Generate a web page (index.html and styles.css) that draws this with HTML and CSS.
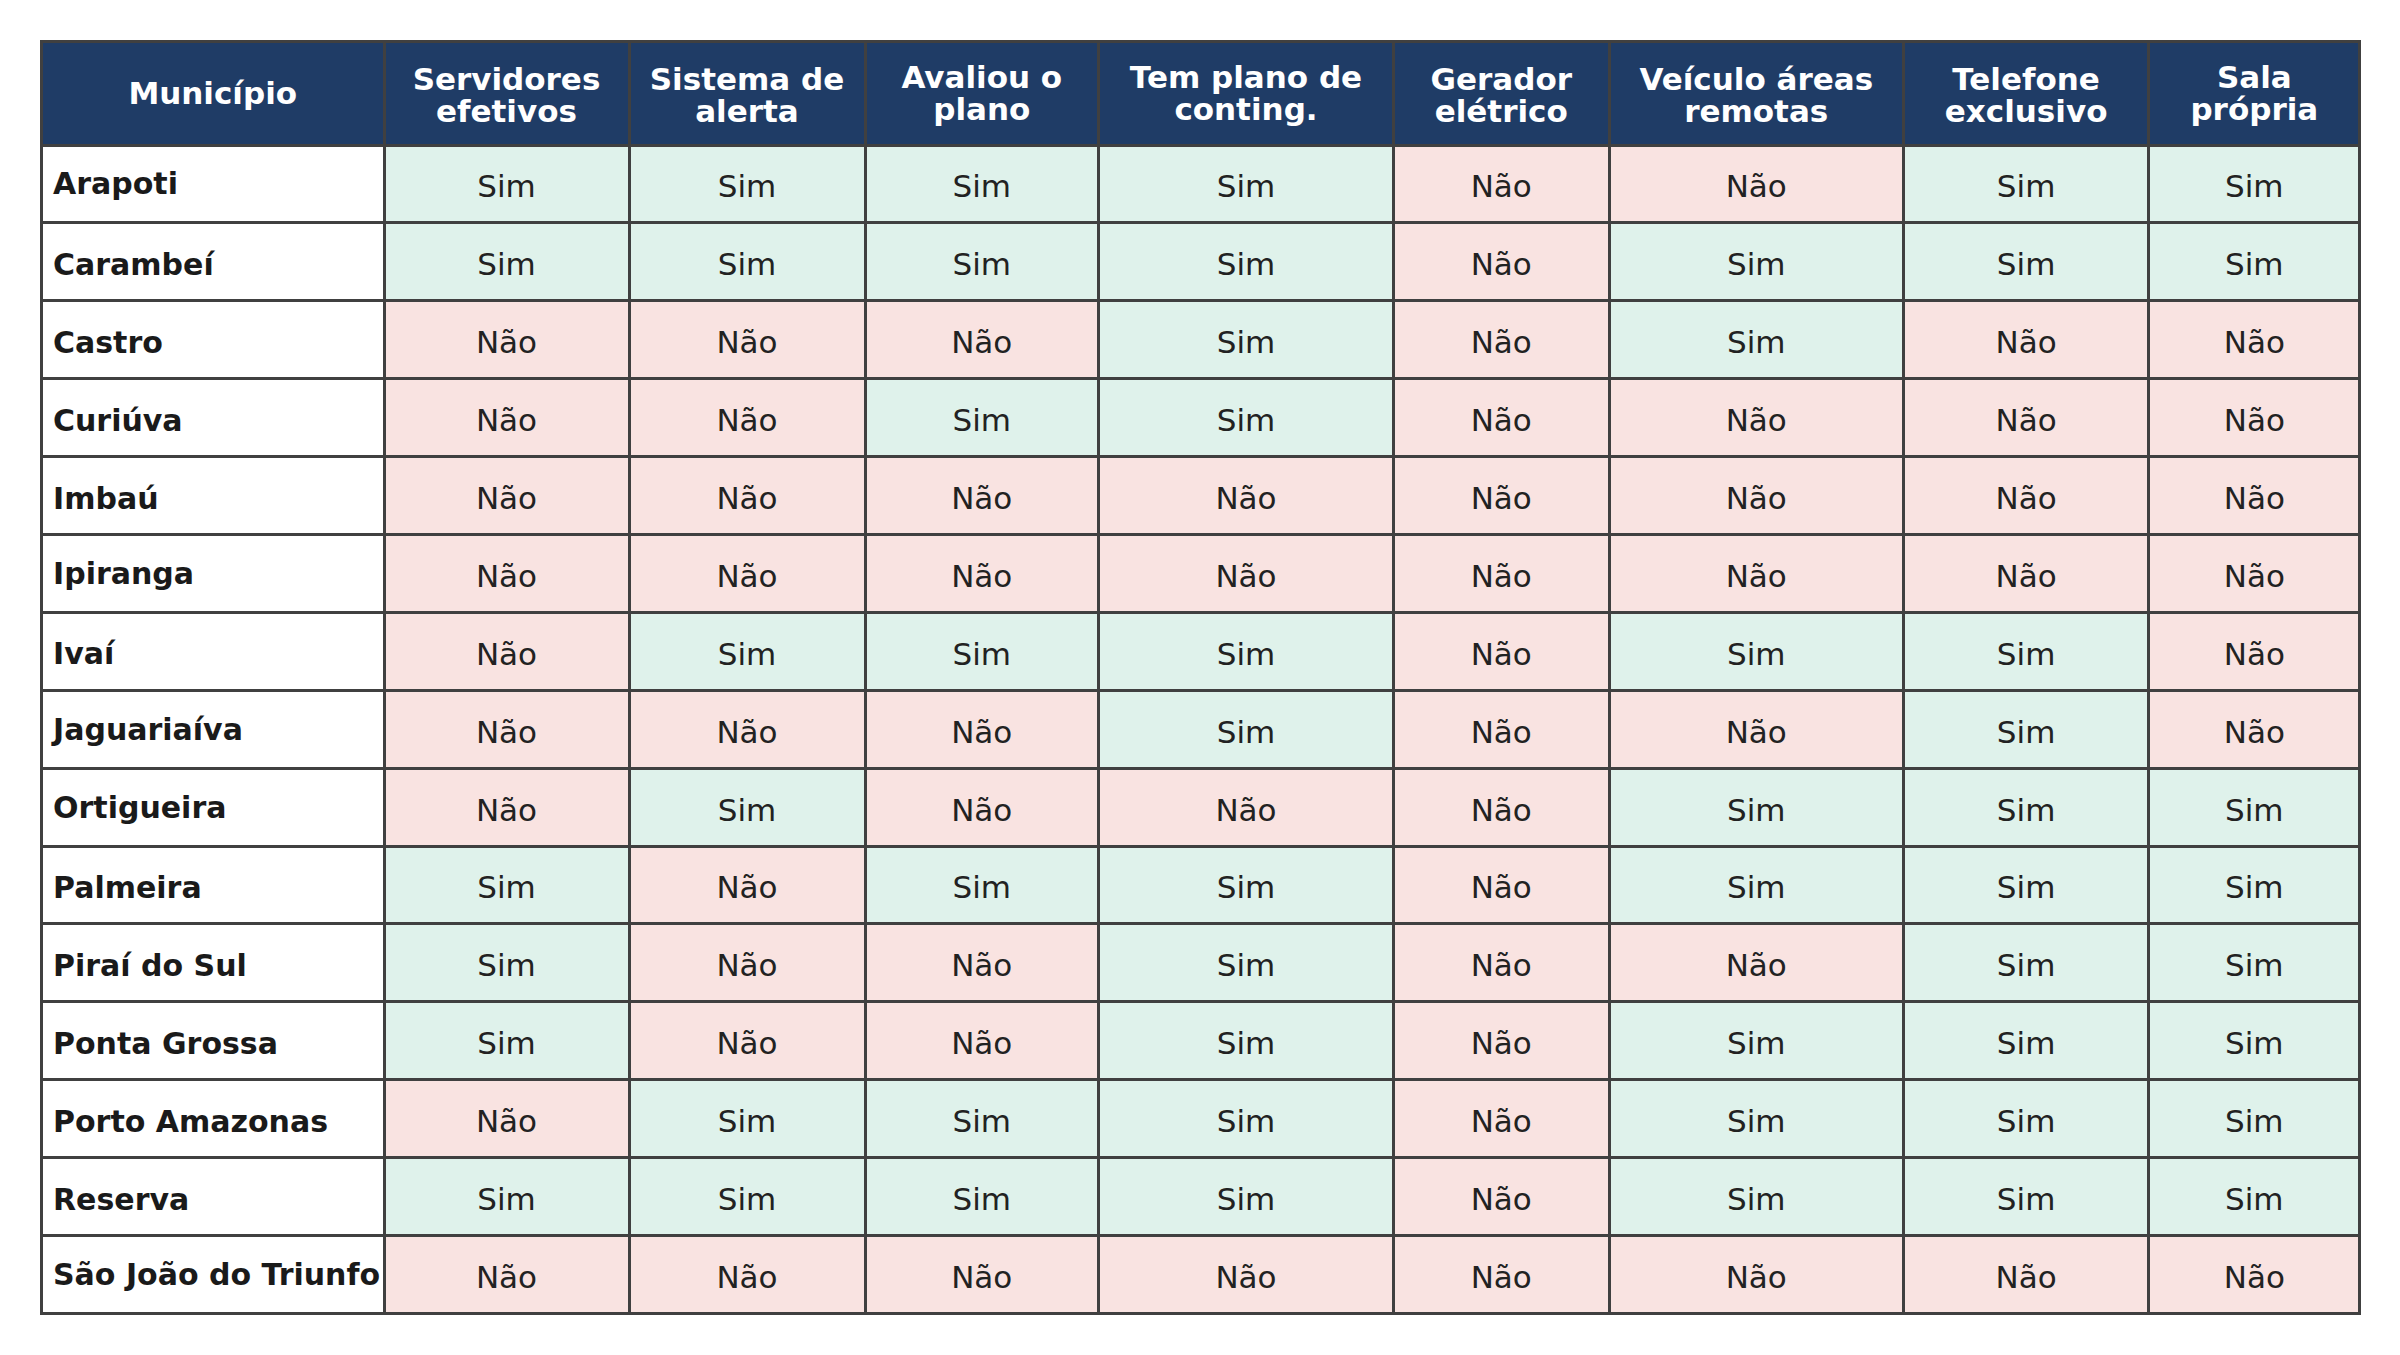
FILE: index.html
```html
<!DOCTYPE html>
<html lang="pt-BR">
<head>
<meta charset="utf-8">
<title>Municípios – capacidade</title>
<link rel="stylesheet" href="styles.css">
</head>
<body>
<main class="page">
<table class="grid-table">
<thead>
<tr>
<th class="lift">Município</th>
<th>Servidores<br>efetivos</th>
<th>Sistema de<br>alerta</th>
<th class="lift">Avaliou o<br>plano</th>
<th class="lift">Tem plano de<br>conting.</th>
<th>Gerador<br>elétrico</th>
<th>Veículo áreas<br>remotas</th>
<th>Telefone<br>exclusivo</th>
<th class="lift">Sala<br>própria</th>
</tr>
</thead>
<tbody>
<tr><th class="name lift">Arapoti</th><td class="yes">Sim</td><td class="yes">Sim</td><td class="yes">Sim</td><td class="yes">Sim</td><td class="no">Não</td><td class="no">Não</td><td class="yes">Sim</td><td class="yes">Sim</td></tr>
<tr><th class="name">Carambeí</th><td class="yes">Sim</td><td class="yes">Sim</td><td class="yes">Sim</td><td class="yes">Sim</td><td class="no">Não</td><td class="yes">Sim</td><td class="yes">Sim</td><td class="yes">Sim</td></tr>
<tr><th class="name">Castro</th><td class="no">Não</td><td class="no">Não</td><td class="no">Não</td><td class="yes">Sim</td><td class="no">Não</td><td class="yes">Sim</td><td class="no">Não</td><td class="no">Não</td></tr>
<tr><th class="name">Curiúva</th><td class="no">Não</td><td class="no">Não</td><td class="yes">Sim</td><td class="yes">Sim</td><td class="no">Não</td><td class="no">Não</td><td class="no">Não</td><td class="no">Não</td></tr>
<tr><th class="name">Imbaú</th><td class="no">Não</td><td class="no">Não</td><td class="no">Não</td><td class="no">Não</td><td class="no">Não</td><td class="no">Não</td><td class="no">Não</td><td class="no">Não</td></tr>
<tr><th class="name lift">Ipiranga</th><td class="no">Não</td><td class="no">Não</td><td class="no">Não</td><td class="no">Não</td><td class="no">Não</td><td class="no">Não</td><td class="no">Não</td><td class="no">Não</td></tr>
<tr><th class="name">Ivaí</th><td class="no">Não</td><td class="yes">Sim</td><td class="yes">Sim</td><td class="yes">Sim</td><td class="no">Não</td><td class="yes">Sim</td><td class="yes">Sim</td><td class="no">Não</td></tr>
<tr><th class="name lift">Jaguariaíva</th><td class="no">Não</td><td class="no">Não</td><td class="no">Não</td><td class="yes">Sim</td><td class="no">Não</td><td class="no">Não</td><td class="yes">Sim</td><td class="no">Não</td></tr>
<tr><th class="name lift">Ortigueira</th><td class="no">Não</td><td class="yes">Sim</td><td class="no">Não</td><td class="no">Não</td><td class="no">Não</td><td class="yes">Sim</td><td class="yes">Sim</td><td class="yes">Sim</td></tr>
<tr><th class="name">Palmeira</th><td class="yes">Sim</td><td class="no">Não</td><td class="yes">Sim</td><td class="yes">Sim</td><td class="no">Não</td><td class="yes">Sim</td><td class="yes">Sim</td><td class="yes">Sim</td></tr>
<tr><th class="name">Piraí do Sul</th><td class="yes">Sim</td><td class="no">Não</td><td class="no">Não</td><td class="yes">Sim</td><td class="no">Não</td><td class="no">Não</td><td class="yes">Sim</td><td class="yes">Sim</td></tr>
<tr><th class="name">Ponta Grossa</th><td class="yes">Sim</td><td class="no">Não</td><td class="no">Não</td><td class="yes">Sim</td><td class="no">Não</td><td class="yes">Sim</td><td class="yes">Sim</td><td class="yes">Sim</td></tr>
<tr><th class="name">Porto Amazonas</th><td class="no">Não</td><td class="yes">Sim</td><td class="yes">Sim</td><td class="yes">Sim</td><td class="no">Não</td><td class="yes">Sim</td><td class="yes">Sim</td><td class="yes">Sim</td></tr>
<tr><th class="name">Reserva</th><td class="yes">Sim</td><td class="yes">Sim</td><td class="yes">Sim</td><td class="yes">Sim</td><td class="no">Não</td><td class="yes">Sim</td><td class="yes">Sim</td><td class="yes">Sim</td></tr>
<tr><th class="name lift">São João do Triunfo</th><td class="no">Não</td><td class="no">Não</td><td class="no">Não</td><td class="no">Não</td><td class="no">Não</td><td class="no">Não</td><td class="no">Não</td><td class="no">Não</td></tr>
</tbody>
</table>
</main>
</body>
</html>
```
FILE: styles.css
```css
html, body {
  margin: 0;
  padding: 0;
  background: #ffffff;
}

.page {
  padding: 40px 0 0 40px;
  font-family: "DejaVu Sans", "Liberation Sans", sans-serif;
  font-size: 31px;
}

.grid-table {
  display: grid;
  grid-template-columns: 342.5px 245px 236px 233.5px 295px 215.5px 294.5px 245.2px 211.3px;
  grid-template-rows: 103.5px repeat(15, 77.9px);
  width: max-content;
  border-left: 3px solid #404040;
  border-top: 3px solid #404040;
  border-collapse: separate;
  border-spacing: 0;
}

.grid-table thead,
.grid-table tbody,
.grid-table tr {
  display: contents;
}

.grid-table th,
.grid-table td {
  box-sizing: border-box;
  display: flex;
  align-items: center;
  justify-content: center;
  margin: 0;
  border-right: 3px solid #404040;
  border-bottom: 3px solid #404040;
  white-space: nowrap;
  overflow: visible;
}

.grid-table thead th {
  background: #1f3c66;
  color: #ffffff;
  font-weight: bold;
  line-height: 32px;
  text-align: center;
  padding: 4px 0 0;
}

.grid-table thead th.lift {
  padding-top: 0;
}

.grid-table tbody th,
.grid-table tbody td {
  padding: 5px 0 0;
  line-height: normal;
}

.grid-table tbody th.name {
  justify-content: flex-start;
  padding-left: 10px;
  background: #ffffff;
  color: #1a1a1a;
  font-size: 30px;
  font-weight: bold;
  text-align: left;
}

.grid-table tbody th.name.lift {
  padding-top: 0;
}

.grid-table td {
  color: #222222;
  font-weight: normal;
}

.grid-table td.yes {
  background: #dff2eb;
}

.grid-table td.no {
  background: #f9e3e1;
}
```
